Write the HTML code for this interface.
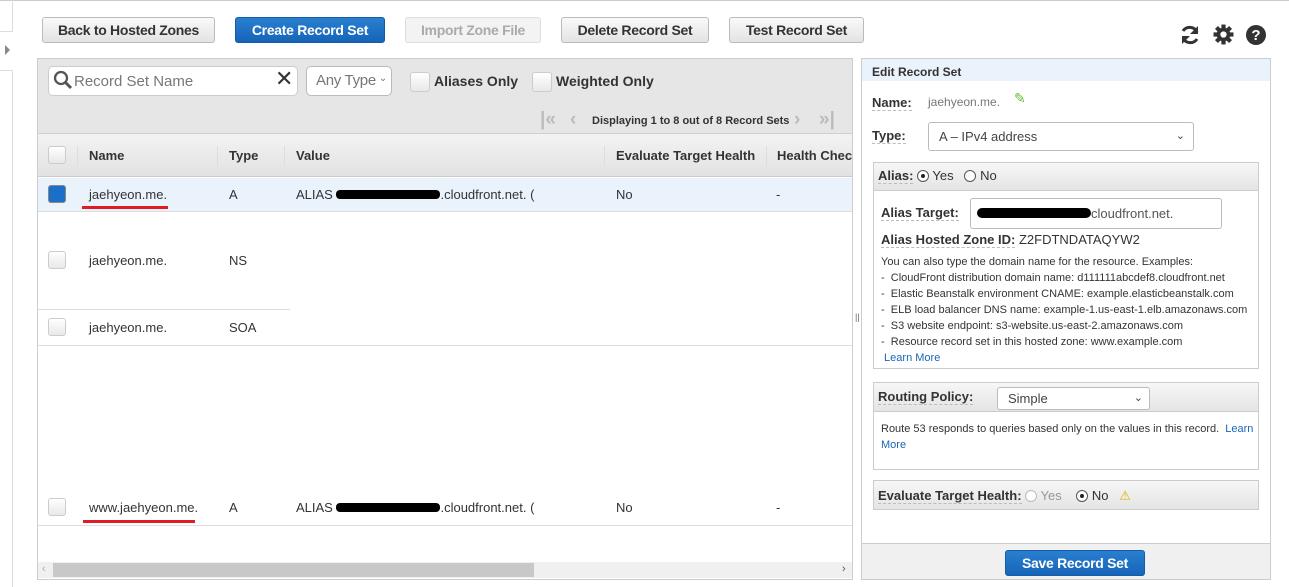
<!DOCTYPE html>
<html><head><style>
*{box-sizing:border-box;margin:0;padding:0}
body{width:1289px;height:587px;position:relative;background:#fff;font-family:"Liberation Sans",Arial,sans-serif;font-size:13px;color:#333;overflow:hidden}
.a{position:absolute}
.btn{position:absolute;top:17px;height:26px;border:1px solid #bbb;border-radius:3px;background:linear-gradient(#f9f9f9,#e3e3e3);font-weight:bold;font-size:14px;color:#333;text-align:center;line-height:24px;letter-spacing:-0.3px}
.blue{background:linear-gradient(#2a7fd0,#1664b8);border-color:#155ca8;color:#fff}
.cb{position:absolute;width:18px;height:18px;border:1px solid #ccc;border-radius:3px;background:linear-gradient(#fff,#e8e8e8)}
.t{position:absolute;font-size:13px;color:#333;white-space:nowrap}
.hl{position:absolute;height:1px;background:#ddd}
.b{font-weight:bold;border-bottom:1px dashed #bbb}
.sec{position:absolute;left:873px;width:386px;border:1px solid #ccc}
.sech{background:linear-gradient(#f7f7f7,#e4e4e4);border-bottom:1px solid #ccc}
.rad{display:inline-block;width:12px;height:12px;border:1px solid #555;border-radius:50%;vertical-align:-2px;position:relative;background:#fff}
.rad.on::after{content:"";position:absolute;left:3px;top:3px;width:4px;height:4px;background:#222;border-radius:50%}
.sm{font-size:11px;line-height:16px;color:#333}
.lk{color:#1a66b8}
.sel{position:absolute;border:1px solid #bbb;border-radius:3px;background:#fff;color:#444;white-space:nowrap}
</style></head><body>
<div class="a" style="left:0;top:0;width:1289px;height:1px;background:#ccc"></div>
<div class="a" style="left:12px;top:0;width:1px;height:31px;background:#ddd"></div>
<div class="a" style="left:0;top:31px;width:13px;height:1px;background:#ddd"></div>
<div class="a" style="left:0;top:70px;width:13px;height:1px;background:#ddd"></div>
<div class="a" style="left:12px;top:70px;width:1px;height:517px;background:#ddd"></div>
<div class="a" style="left:5px;top:45px;border-left:5px solid #888;border-top:5px solid transparent;border-bottom:5px solid transparent"></div>

<div class="btn" style="left:42px;width:173px">Back to Hosted Zones</div>
<div class="btn blue" style="left:235px;width:150px">Create Record Set</div>
<div class="btn" style="left:405px;width:136px;color:#aaa;background:#f3f3f3;border-color:#ddd">Import Zone File</div>
<div class="btn" style="left:561px;width:148px">Delete Record Set</div>
<div class="btn" style="left:729px;width:135px">Test Record Set</div>

<svg class="a" style="left:1179px;top:24px" width="22" height="22" viewBox="0 0 22 22"><path d="M18 8A8 8 0 0 0 4 7M4 14a8 8 0 0 0 14 1" fill="none" stroke="#333" stroke-width="3"/><path d="M19 2v8h-8z M3 20v-8h8z" fill="#333"/></svg>
<svg class="a" style="left:1213px;top:24px" width="21" height="21" viewBox="0 0 20 20"><g fill="#333"><circle cx="10" cy="10" r="6.5"/><rect x="8" y="0.5" width="4" height="19"/><rect x="0.5" y="8" width="19" height="4"/><rect x="8" y="0.5" width="4" height="19" transform="rotate(45 10 10)"/><rect x="8" y="0.5" width="4" height="19" transform="rotate(-45 10 10)"/></g><circle cx="10" cy="10" r="3" fill="#fff"/></svg>
<svg class="a" style="left:1245px;top:24px" width="22" height="22" viewBox="0 0 22 22"><circle cx="11" cy="11" r="10" fill="#333"/><text x="11" y="16" text-anchor="middle" font-family="Liberation Sans" font-weight="bold" font-size="15" fill="#fff">?</text></svg>

<div class="a" style="left:37px;top:58px;width:816px;height:522px;border:1px solid #ccc;background:#fff"></div>
<div class="a" style="left:38px;top:59px;width:814px;height:75px;background:#e6e6e6;border-bottom:1px solid #d0d0d0"></div>
<div class="a" style="left:48px;top:66px;width:250px;height:30px;border:1px solid #ccc;border-radius:5px;background:#fff"></div>
<svg class="a" style="left:53px;top:70px" width="20" height="20" viewBox="0 0 20 20"><circle cx="8" cy="8" r="6" fill="none" stroke="#555" stroke-width="2.3"/><path d="M12 12l6 6" stroke="#555" stroke-width="3"/></svg>
<div class="t" style="left:74px;top:73px;font-size:15px;color:#777">Record Set Name</div>
<div class="t" style="left:275px;top:66px;font-size:22px;color:#333">✕</div>
<div class="sel" style="left:306px;top:66px;width:86px;height:30px;border-radius:5px;font-size:15px;line-height:28px;padding-left:9px;color:#777;letter-spacing:-0.3px">Any Type<span style="position:absolute;right:4px;top:-2px;font-size:10px">⌄</span></div>
<div class="cb" style="left:410px;top:72px;width:20px;height:20px"></div>
<div class="t" style="left:434px;top:73px;font-size:14px;font-weight:bold">Aliases Only</div>
<div class="cb" style="left:532px;top:72px;width:20px;height:20px"></div>
<div class="t" style="left:556px;top:73px;font-size:14px;font-weight:bold">Weighted Only</div>
<div class="t" style="left:540px;top:109px;font-size:19px;color:#bbb;font-weight:bold">|«</div>
<div class="t" style="left:570px;top:109px;font-size:19px;color:#bbb;font-weight:bold">‹</div>
<div class="t" style="left:592px;top:115px;font-size:11px;font-weight:bold">Displaying 1 to 8 out of 8 Record Sets</div>
<div class="t" style="left:794px;top:109px;font-size:19px;color:#bbb;font-weight:bold">›</div>
<div class="t" style="left:819px;top:109px;font-size:19px;color:#bbb;font-weight:bold">»|</div>

<div class="a" style="left:38px;top:134px;width:814px;height:43px;background:linear-gradient(#f3f3f3,#e2e2e2);border-bottom:1px solid #ccc"></div>
<div class="cb" style="left:48px;top:146px"></div>
<div class="a" style="left:77px;top:146px;width:1px;height:20px;background:#ddd"></div>
<div class="a" style="left:217px;top:146px;width:1px;height:20px;background:#ddd"></div>
<div class="a" style="left:284px;top:146px;width:1px;height:20px;background:#ddd"></div>
<div class="a" style="left:604px;top:146px;width:1px;height:20px;background:#ddd"></div>
<div class="a" style="left:766px;top:146px;width:1px;height:20px;background:#ddd"></div>
<div class="t" style="left:89px;top:148px;font-weight:bold">Name</div>
<div class="t" style="left:229px;top:148px;font-weight:bold">Type</div>
<div class="t" style="left:296px;top:148px;font-weight:bold">Value</div>
<div class="t" style="left:616px;top:148px;font-weight:bold">Evaluate Target Health</div>
<div class="t" style="left:777px;top:148px;font-weight:bold">Health Chec</div>

<div class="a" style="left:38px;top:178px;width:814px;height:34px;background:#eaf2fc;border-bottom:1px solid #ddd"></div>
<div class="cb" style="left:48px;top:185px;background:#1a6fc8;border-color:#888"></div>
<div class="t" style="left:89px;top:187px">jaehyeon.me.</div>
<div class="a" style="left:82px;top:206px;width:86px;height:3px;background:#e01b24"></div>
<div class="t" style="left:229px;top:187px">A</div>
<div class="t" style="left:296px;top:187px">ALIAS <span style="display:inline-block;width:104px;height:9px;background:#000;border-radius:4px;vertical-align:0"></span>.cloudfront.net. (</div>
<div class="t" style="left:616px;top:187px">No</div>
<div class="t" style="left:776px;top:187px">-</div>

<div class="cb" style="left:48px;top:251px"></div>
<div class="t" style="left:89px;top:253px">jaehyeon.me.</div>
<div class="t" style="left:229px;top:253px">NS</div>
<div class="hl" style="left:38px;top:309px;width:252px"></div>
<div class="cb" style="left:48px;top:318px"></div>
<div class="t" style="left:89px;top:320px">jaehyeon.me.</div>
<div class="t" style="left:229px;top:320px">SOA</div>
<div class="hl" style="left:38px;top:345px;width:814px"></div>

<div class="cb" style="left:48px;top:498px"></div>
<div class="t" style="left:89px;top:500px">www.jaehyeon.me.</div>
<div class="a" style="left:83px;top:520px;width:112px;height:3px;background:#e01b24"></div>
<div class="t" style="left:229px;top:500px">A</div>
<div class="t" style="left:296px;top:500px">ALIAS <span style="display:inline-block;width:104px;height:9px;background:#000;border-radius:4px;vertical-align:0"></span>.cloudfront.net. (</div>
<div class="t" style="left:616px;top:500px">No</div>
<div class="t" style="left:776px;top:500px">-</div>
<div class="hl" style="left:38px;top:525px;width:814px"></div>
<div class="a" style="left:38px;top:562px;width:814px;height:16px;background:#f0f0f0"></div>
<div class="a" style="left:53px;top:563px;width:481px;height:14px;background:#c8c8c8"></div>
<div class="t" style="left:42px;top:563px;font-size:11px;color:#aaa">‹</div>
<div class="t" style="left:842px;top:563px;font-size:11px;color:#555">›</div>
<div class="t" style="left:855px;top:312px;font-size:9px;color:#666">||</div>

<div class="a" style="left:861px;top:58px;width:410px;height:522px;border:1px solid #ccc;background:#fff"></div>
<div class="a" style="left:862px;top:59px;width:408px;height:22px;background:#eaf2fc"></div>
<div class="t" style="left:872px;top:65px;font-size:12px;font-weight:bold;color:#333">Edit Record Set</div>
<div class="t" style="left:872px;top:95px"><span class="b">Name:</span></div>
<div class="t" style="left:928px;top:95px;color:#777;font-size:12px">jaehyeon.me.</div>
<div class="t" style="left:1014px;top:90px;color:#6b3;font-size:14px">✎</div>
<div class="t" style="left:872px;top:128px"><span class="b">Type:</span></div>
<div class="sel" style="left:928px;top:122px;width:266px;height:29px;line-height:27px;padding-left:10px;font-size:13px">A – IPv4 address<span style="position:absolute;right:8px;font-size:11px">⌄</span></div>

<div class="sec" style="top:162px;height:207px">
 <div class="sech" style="height:28px;padding:5px 0 0 4px"><span class="b">Alias:</span> <span class="rad on"></span> Yes &nbsp; <span class="rad"></span> No</div>
</div>
<div class="t" style="left:881px;top:205px"><span class="b">Alias Target:</span></div>
<div class="sel" style="left:970px;top:198px;width:252px;height:31px;line-height:29px;padding-left:6px;color:#555"><span style="display:inline-block;width:114px;height:10px;background:#000;border-radius:5px;vertical-align:0"></span>cloudfront.net.</div>
<div class="t" style="left:881px;top:232px"><span class="b">Alias Hosted Zone ID:</span> Z2FDTNDATAQYW2</div>
<div class="a sm" style="left:881px;top:254px;width:375px">You can also type the domain name for the resource. Examples:<br>-&nbsp; CloudFront distribution domain name: d111111abcdef8.cloudfront.net<br>-&nbsp; Elastic Beanstalk environment CNAME: example.elasticbeanstalk.com<br>-&nbsp; ELB load balancer DNS name: example-1.us-east-1.elb.amazonaws.com<br>-&nbsp; S3 website endpoint: s3-website.us-east-2.amazonaws.com<br>-&nbsp; Resource record set in this hosted zone: www.example.com<br><span class="lk">&nbsp;Learn More</span></div>

<div class="sec" style="top:382px;height:88px">
 <div class="sech" style="height:29px;padding:6px 0 0 4px"><span class="b">Routing Policy:</span></div>
</div>
<div class="sel" style="left:997px;top:387px;width:153px;height:23px;line-height:21px;padding-left:10px">Simple<span style="position:absolute;right:6px;font-size:11px">⌄</span></div>
<div class="a sm" style="left:881px;top:421px;width:375px">Route 53 responds to queries based only on the values in this record.&nbsp; <span class="lk">Learn More</span></div>

<div class="sec sech" style="top:480px;height:30px;padding:7px 0 0 4px"><span class="b">Evaluate Target Health:</span> <span class="rad" style="border-color:#bbb"></span> <span style="color:#999">Yes</span> &nbsp;&nbsp; <span class="rad on"></span> No &nbsp;&nbsp;<span style="color:#d9b400">⚠</span></div>

<div class="a" style="left:862px;top:543px;width:408px;height:36px;background:#f0f0f0;border-top:1px solid #ccc"></div>
<div class="btn blue" style="left:1005px;top:550px;width:140px;height:26px">Save Record Set</div>
</body></html>
